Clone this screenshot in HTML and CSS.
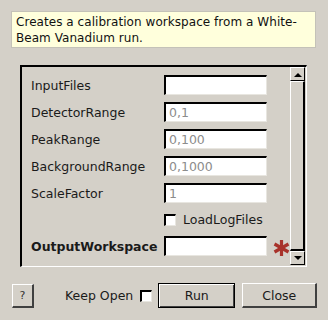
FILE: index.html
```html
<!DOCTYPE html>
<html lang="en">
<head>
    <meta charset="UTF-8">
    <title>CreateCalibrationWorkspace</title>
    <link rel="stylesheet" href="styles.css">
</head>
<body>
<div class="dialog">
    <div class="tip">Creates a calibration workspace from a White-Beam Vanadium run.</div>

    <div class="panel">
        <div class="rows">
            <div class="row">
                <span class="row__label">InputFiles</span>
                <span class="field"></span>
            </div>
            <div class="row">
                <span class="row__label">DetectorRange</span>
                <span class="field">0,1</span>
            </div>
            <div class="row">
                <span class="row__label">PeakRange</span>
                <span class="field">0,100</span>
            </div>
            <div class="row">
                <span class="row__label">BackgroundRange</span>
                <span class="field">0,1000</span>
            </div>
            <div class="row">
                <span class="row__label">ScaleFactor</span>
                <span class="field">1</span>
            </div>
            <div class="row row--check">
                <span class="row__label"></span>
                <span class="check"></span>
                <span class="check__text">LoadLogFiles</span>
            </div>
            <div class="row">
                <span class="row__label row__label--bold">OutputWorkspace</span>
                <span class="field"></span>
                <svg class="star" width="17" height="18" viewBox="0 0 17 18">
                    <g stroke="#a8322a" stroke-width="3.2" stroke-linecap="butt">
                        <line x1="8.5" y1="1" x2="8.5" y2="17"/>
                        <line x1="1.5" y1="5" x2="15.5" y2="13"/>
                        <line x1="1.5" y1="13" x2="15.5" y2="5"/>
                    </g>
                </svg>
            </div>
        </div>
        <div class="scroll">
            <div class="scroll__btn">
                <svg width="8" height="5" viewBox="0 0 8 5"><path d="M0 5 L4 1 L8 5 Z" fill="#000"/></svg>
            </div>
            <div class="scroll__thumb"></div>
            <div class="scroll__btn">
                <svg width="8" height="5" viewBox="0 0 8 5"><path d="M0 0 L4 4 L8 0 Z" fill="#000"/></svg>
            </div>
        </div>
    </div>

    <div class="footer">
        <button class="btn btn--help">?</button>
        <span class="keep">Keep Open</span>
        <span class="check check--keep"></span>
        <button class="btn btn--run">Run</button>
        <button class="btn btn--close">Close</button>
    </div>
</div>
</body>
</html>
```

FILE: styles.css
```css
html, body {
  margin: 0;
  padding: 0;
}

body {
  background: #d4d0c8;
  font-family: "DejaVu Sans", sans-serif;
  font-size: 12px;
  color: #000;
  width: 328px;
  height: 320px;
  overflow: hidden;
}

.dialog {
  display: flex;
  flex-direction: column;
}

.tip {
  margin: 11px 12px 0 11px;
  height: 37px;
  box-sizing: border-box;
  padding: 2px 4px;
  background: #ffffdc;
  border: 1px solid #c4c2b8;
  line-height: 16px;
  letter-spacing: 0.05px;
  color: #111;
}

.panel {
  display: flex;
  margin: 17px 0 0 20px;
  width: 287px;
  height: 202px;
  box-sizing: border-box;
  border-top: 2px solid #000;
  border-left: 2px solid #000;
  border-right: 1px solid #fff;
  border-bottom: 1px solid #fff;
}

.rows {
  flex: 1;
  display: flex;
  flex-direction: column;
  gap: 7px;
  padding: 8px 0 0 9px;
}

.row {
  display: flex;
  align-items: center;
  height: 20px;
}

.row--check {
  height: 19px;
}

.row__label {
  width: 133px;
  font-size: 12.5px;
  color: #1a1a1a;
}

.row__label--bold {
  font-weight: bold;
}

.field {
  width: 103px;
  height: 20px;
  box-sizing: border-box;
  background: #fff;
  border-top: 2px solid #000;
  border-left: 2px solid #000;
  border-right: 1px solid #e8e6e0;
  border-bottom: 1px solid #e8e6e0;
  padding: 0 3px;
  font-size: 12.5px;
  line-height: 17px;
  color: #8c8c8c;
}

.check {
  width: 12px;
  height: 12px;
  box-sizing: border-box;
  background: #fff;
  border-top: 2px solid #000;
  border-left: 2px solid #000;
  border-right: 1px solid #e8e6e0;
  border-bottom: 1px solid #e8e6e0;
}

.check__text {
  margin-left: 7px;
  font-size: 12.5px;
  color: #1a1a1a;
}

.star {
  margin-left: 6px;
  margin-top: 3px;
}

.scroll {
  display: flex;
  flex-direction: column;
  width: 15px;
  margin: 0 1px 1px 0;
}

.scroll__btn {
  height: 14px;
  box-sizing: border-box;
  display: flex;
  align-items: center;
  justify-content: center;
  border-top: 1px solid #fff;
  border-left: 1px solid #fff;
  border-right: 1px solid #000;
  border-bottom: 1px solid #000;
}

.scroll__thumb {
  flex: 1;
  box-sizing: border-box;
  border-top: 1px solid #fff;
  border-left: 1px solid #fff;
  border-right: 2px solid #000;
  border-bottom: 2px solid #000;
}

.footer {
  display: flex;
  align-items: center;
  margin-top: 16px;
  padding-left: 12px;
  height: 25px;
}

.btn {
  box-sizing: border-box;
  background: #d4d0c8;
  font-family: "DejaVu Sans", sans-serif;
  font-size: 12.5px;
  color: #1a1a1a;
  padding: 0;
  border-top: 1px solid #fff;
  border-left: 1px solid #fff;
  border-right: 2px solid #404040;
  border-bottom: 2px solid #404040;
}

.btn--help {
  width: 22px;
  height: 24px;
  font-size: 11px;
  color: #333;
}

.keep {
  margin-left: 31px;
  font-size: 12.5px;
  color: #1a1a1a;
}

.check--keep {
  margin-left: 7px;
}

.btn--run {
  margin-left: 6px;
  width: 77px;
  height: 25px;
  border: 1px solid #000;
  box-shadow: inset 1px 1px 0 #fff, inset -1px -1px 0 #404040;
}

.btn--close {
  margin-left: 7px;
  width: 75px;
  height: 25px;
}
```
